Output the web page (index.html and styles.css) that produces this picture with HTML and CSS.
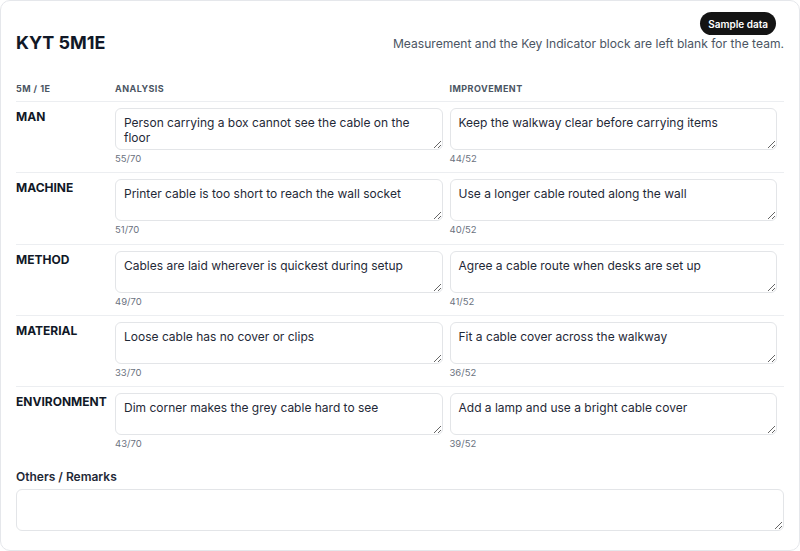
FILE: index.html
```html
<!DOCTYPE html>
<html lang="en">
<head>
<meta charset="utf-8">
<title>KYT 5M1E</title>
<link rel="stylesheet" href="styles.css">
</head>
<body>
<main class="card">
  <span class="badge">Sample data</span>
  <header class="head">
    <h1 class="title">KYT 5M1E</h1>
    <p class="subtitle">Measurement and the Key Indicator block are left blank for the team.</p>
  </header>
  <table class="grid">
    <colgroup><col class="col-label"><col><col></colgroup>
    <thead>
      <tr><th>5M / 1E</th><th>Analysis</th><th>Improvement</th></tr>
    </thead>
    <tbody>
      <tr>
        <td class="label">MAN</td>
        <td><textarea class="field">Person carrying a box cannot see the cable on the floor</textarea><div class="count">55/70</div></td>
        <td><textarea class="field">Keep the walkway clear before carrying items</textarea><div class="count">44/52</div></td>
      </tr>
      <tr>
        <td class="label">MACHINE</td>
        <td><textarea class="field">Printer cable is too short to reach the wall socket</textarea><div class="count">51/70</div></td>
        <td><textarea class="field">Use a longer cable routed along the wall</textarea><div class="count">40/52</div></td>
      </tr>
      <tr>
        <td class="label">METHOD</td>
        <td><textarea class="field">Cables are laid wherever is quickest during setup</textarea><div class="count">49/70</div></td>
        <td><textarea class="field">Agree a cable route when desks are set up</textarea><div class="count">41/52</div></td>
      </tr>
      <tr>
        <td class="label">MATERIAL</td>
        <td><textarea class="field">Loose cable has no cover or clips</textarea><div class="count">33/70</div></td>
        <td><textarea class="field">Fit a cable cover across the walkway</textarea><div class="count">36/52</div></td>
      </tr>
      <tr>
        <td class="label">ENVIRONMENT</td>
        <td><textarea class="field">Dim corner makes the grey cable hard to see</textarea><div class="count">43/70</div></td>
        <td><textarea class="field">Add a lamp and use a bright cable cover</textarea><div class="count">39/52</div></td>
      </tr>
    </tbody>
  </table>
  <section class="remarks">
    <label class="remarks-label" for="remarks">Others / Remarks</label>
    <textarea id="remarks" class="field"></textarea>
  </section>
</main>
</body>
</html>
```
FILE: styles.css
```css
* { box-sizing: border-box; }
html, body { margin: 0; padding: 0; background: #ffffff; }
body {
  font-family: Inter, "Noto Sans", "Liberation Sans", sans-serif;
  color: #111827;
}
.card {
  position: relative;
  width: 800px;
  border: 1px solid #e5e7eb;
  border-radius: 10px;
  padding: 28px 15px 19px;
  background: #fff;
}
.badge {
  position: absolute;
  top: 11px;
  right: 23px;
  height: 23px;
  padding: 0 8px;
  display: flex;
  align-items: center;
  border-radius: 999px;
  background: #141414;
  color: #fff;
  font-size: 10px;
  font-weight: 600;
}
.head {
  display: flex;
  align-items: center;
  justify-content: space-between;
}
.title {
  margin: 0;
  font-size: 18px;
  line-height: 28px;
  font-weight: 700;
  color: #111827;
}
.subtitle {
  margin: 2px 0 0;
  font-size: 12.1px;
  line-height: 18px;
  color: #4b5563;
}
.grid {
  width: 100%;
  margin-top: 26px;
  border-collapse: collapse;
  table-layout: fixed;
}
.col-label { width: 99px; }
.grid th {
  text-align: left;
  font-size: 9px;
  line-height: 12px;
  font-weight: 700;
  letter-spacing: 0.05em;
  text-transform: uppercase;
  color: #4b5563;
  padding: 0 8px 6px 0;
  border-bottom: 1px solid #eceef1;
}
.grid td {
  vertical-align: top;
  padding: 6px 7px 7.3px 0;
  border-top: 1px solid #eceef1;
}
.grid tbody tr:first-child td { border-top: none; }
.grid td.label {
  font-size: 12px;
  line-height: 17px;
  font-weight: 700;
  color: #111827;
  padding-right: 8px;
}
.field {
  display: block;
  width: 100%;
  height: 42px;
  margin: 0;
  padding: 6px 8px 5px;
  border: 1px solid #e3e5e8;
  border-radius: 6px;
  font-family: inherit;
  font-size: 12px;
  line-height: 15px;
  color: #1f2937;
  background: #fff;
  resize: vertical;
  overflow: hidden;
}
.count {
  margin-top: 3px;
  font-size: 9.5px;
  line-height: 12px;
  color: #6b7280;
}
.remarks { margin-top: 11px; }
.remarks-label {
  display: block;
  margin-bottom: 3px;
  font-size: 12px;
  line-height: 18px;
  font-weight: 600;
  color: #1f2937;
}
```
